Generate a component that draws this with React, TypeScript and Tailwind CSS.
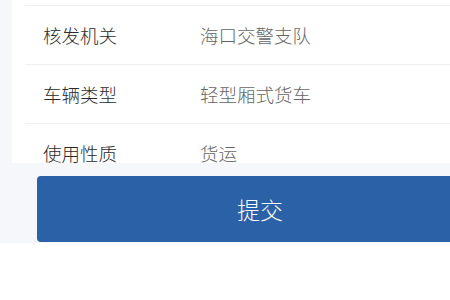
const rows = [
  { label: '核发机关', value: '海口交警支队' },
  { label: '车辆类型', value: '轻型厢式货车' },
  { label: '使用性质', value: '货运' },
];

export default function App() {
  return (
    <div
      className="w-[450px] h-[300px] bg-white overflow-hidden"
      style={{ fontFamily: '"Noto Sans CJK SC", "Noto Sans", sans-serif' }}
    >
      <div className="h-[243px] bg-[#f6f7fa] flex flex-col">
        <div className="h-[163px] overflow-hidden ml-3 bg-white">
          <div className="h-[6px] ml-[13px] border-b border-[#efefef]" />
          {rows.map((r) => (
            <div key={r.label} className="h-[59px] ml-[13px] border-b border-[#efefef] flex items-center pt-[2px]">
              <span className="w-[175px] pl-[18px] text-[18.5px] font-light text-[#2a2a2a]">{r.label}</span>
              <span className="text-[18.5px] font-light text-[#666]">{r.value}</span>
            </div>
          ))}
        </div>
        <div className="flex-1 pt-[13px] pl-[37px] pb-px">
          <button className="w-[446px] h-[66px] rounded bg-[#2b61a7] text-white text-[23px] font-light flex items-center justify-center">
            提交
          </button>
        </div>
      </div>
    </div>
  );
}
